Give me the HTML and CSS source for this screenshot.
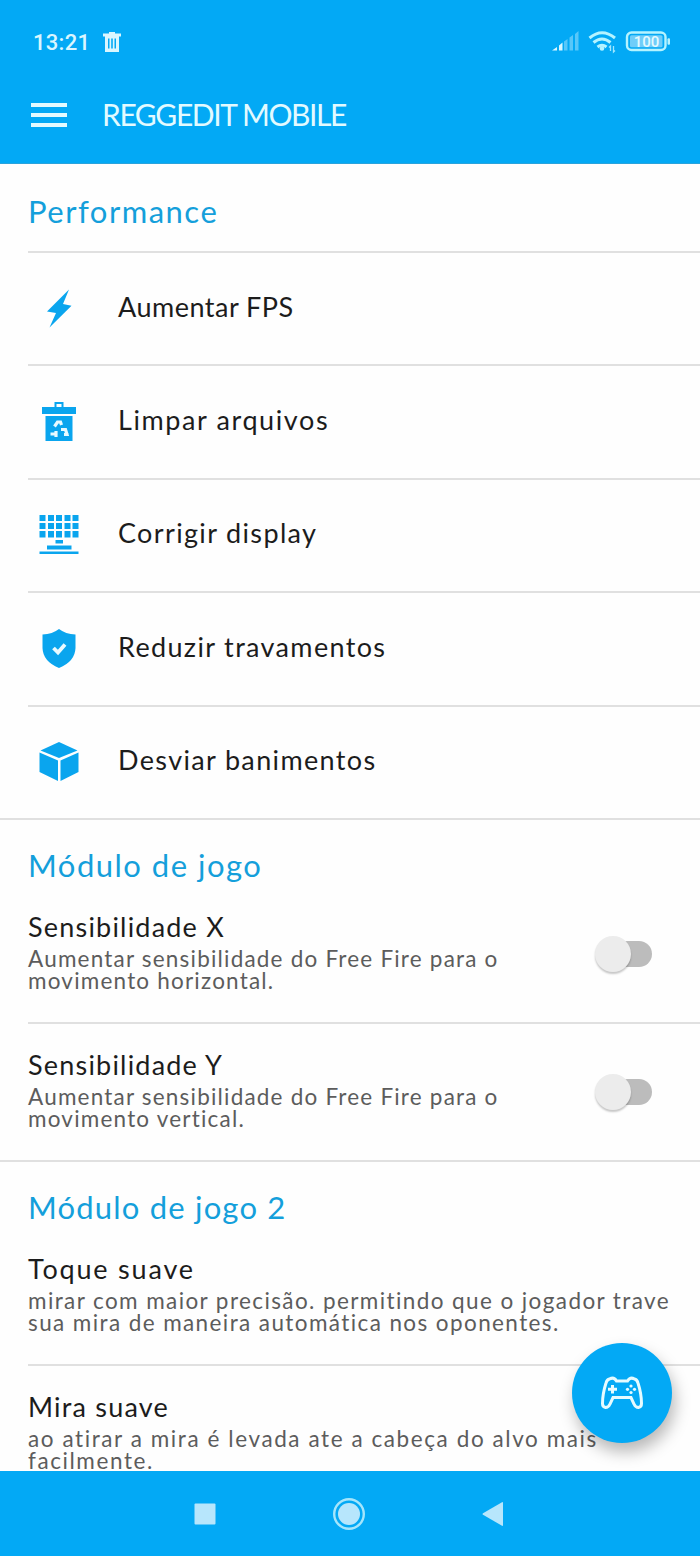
FILE: index.html
```html
<!DOCTYPE html>
<html lang="pt-BR">

<head>
    <meta charset="UTF-8">
    <meta name="viewport" content="width=device-width, initial-scale=1.0">
    <title>Reggedit Mobile</title>
    <link rel="stylesheet" href="styles.css">
</head>

<body>

    <div class="screen">
        <header>
            <div class="status-bar">
                <span class="clock">13:21</span>
                <svg class="status-trash" width="18" height="20" viewBox="0 0 18 20">
                    <path fill="#d9f6ff" fill-rule="evenodd" d="M6 0h6v1.500h6v3H0v-3h6zM2 4.500h14V20H2zM5 6.500v10h1.500v-10zM8.200 6.500v10h1.600v-10zM11.500 6.500v10h1.500v-10z" />
                </svg>
                <svg class="status-icons" width="120" height="24" viewBox="0 0 120 24">
                    <g fill="#d9f6ff">
                        <path d="M0 20.500l5-3.500v3.500zM7 15.500l3.500-3v8H7z" />
                        <path opacity="0.4" d="M12 11.500l3.500-2.500v11.500H12zM17.500 7.500L21 5v15.500h-3.500zM23 4l3.500-3v19.500H23z" />
                    </g>
                    <g fill="none" stroke="#b5f3ff" stroke-width="3">
                        <path d="M37.500 8q12.500-10.500 25.500 0" />
                        <path d="M41.500 12.500q8.500-7 17 0" />
                        <path d="M45.500 17q4.500-3.500 9 0" />
                    </g>
                    <circle cx="50" cy="18.500" r="2.300" fill="#b5f3ff" />
                    <path d="M58.500 21v-5l-1.500 1.500M61.500 16v6l1.500-1.500" fill="none" stroke="#9fe6ff" stroke-width="1.300" />
                    <rect x="75" y="2.500" width="38.500" height="17.500" rx="4.500" fill="none" stroke="#b5f3ff" stroke-width="2.400" />
                    <rect x="78" y="5.200" width="32.500" height="12" rx="1.500" fill="#6fcdf9" />
                    <rect x="115.500" y="8.200" width="2.500" height="6.500" rx="1" fill="#b5f3ff" />
                    <text class="battery" x="94.500" y="16.600" text-anchor="middle">100</text>
                </svg>
            </div>
            <div class="app-bar">
                <div class="menu">
                    <span></span>
                    <span></span>
                    <span></span>
                </div>
                <h1>REGGEDIT MOBILE</h1>
            </div>
        </header>

        <main>
            <section class="performance">
                <h2>Performance</h2>
                <ul>
                    <li>
                        <svg class="icon" viewBox="0 0 44 44">
                            <path d="M32 2.500L10 24.500l9 1.500L12.500 40.500 34.500 18.700l-8.500-1.700z" />
                        </svg>
                        <span class="short">Aumentar FPS</span>
                    </li>
                    <li>
                        <svg class="icon" viewBox="0 0 44 44">
                            <path fill-rule="evenodd" d="M17.500 2h9v5h12.500v7H5V7h12.500zM19.500 4v3h5V4z" />
                            <path d="M8.500 16h27v25h-27z" />
                            <g class="recycle">
                                <path d="M17.500 26.500l3-4.500h3l1 3" />
                                <path d="M13.500 34h7M19 31v6" />
                                <path d="M24 29.500h4.500l1.500 5h-3M29.500 34.500h2" />
                            </g>
                        </svg>
                        <span class="wide">Limpar arquivos</span>
                    </li>
                    <li>
                        <svg class="icon" viewBox="0 0 44 44">
                            <path d="M2.500 2h6v6h-6zM11 2h6v6h-6zM19 2h6v6h-6zM27.500 2h6v6h-6zM35.500 2h6v6h-6zM2.500 10h6v6h-6zM11 10h6v6h-6zM19 10h6v6h-6zM27.500 10h6v6h-6zM35.500 10h6v6h-6zM2.500 18h6v6.500h-6zM11 18h6v6.500h-6zM19 18h6v6.500h-6zM27.500 18h6v6.500h-6zM35.500 18h6v6.500h-6z" />
                            <path d="M18.500 27h7.500v3.500h-7.500zM10 32.500h24.500v4H10zM2.500 38.500h39v2.500h-39z" />
                        </svg>
                        <span>Corrigir display</span>
                    </li>
                    <li>
                        <svg class="icon" viewBox="0 0 44 44">
                            <path d="M22 2q6.500 5 16.500 5.500v13.500Q38 34.500 22 41 6 34.500 5.500 21V7.500Q15.500 7 22 2z" />
                            <path class="check" d="M16.500 21l4.500 4.500 7-8" />
                        </svg>
                        <span>Reduzir travamentos</span>
                    </li>
                    <li>
                        <svg class="icon" viewBox="0 0 44 44">
                            <path d="M22 2l18.500 8.500L22 18 3.500 10.500z" />
                            <path d="M2.500 12.500L21 20.500V41L2.500 32zM41.500 12.500L23.500 20.500V41l18-9z" />
                        </svg>
                        <span>Desviar banimentos</span>
                    </li>
                </ul>
            </section>

            <section class="module">
                <h2>Módulo de jogo</h2>
                <div class="option">
                    <div class="option-text">
                        <h3>Sensibilidade X</h3>
                        <p>Aumentar sensibilidade do Free Fire para o<br>movimento horizontal.</p>
                    </div>
                    <div class="switch"><span class="knob"></span></div>
                </div>
                <div class="option">
                    <div class="option-text">
                        <h3>Sensibilidade Y</h3>
                        <p>Aumentar sensibilidade do Free Fire para o<br>movimento vertical.</p>
                    </div>
                    <div class="switch"><span class="knob"></span></div>
                </div>
            </section>

            <section class="module aim">
                <h2>Módulo de jogo 2</h2>
                <div class="option">
                    <div class="option-text">
                        <h3 class="wide">Toque suave</h3>
                        <p>mirar com maior precisão. permitindo que o jogador trave<br>sua mira de maneira automática nos oponentes.</p>
                    </div>
                </div>
                <div class="option">
                    <div class="option-text">
                        <h3>Mira suave</h3>
                        <p class="wide">ao atirar a mira é levada ate a cabeça do alvo mais<br>facilmente.</p>
                    </div>
                </div>
            </section>
        </main>

        <div class="fab">
            <svg width="44" height="34" viewBox="0 0 44 34">
                <path class="pad" d="M9.500 3Q14 .5 16.500 5h11Q30 .5 34.500 3 37 3.500 38 7q3.500 11 3.500 20.500 0 3.500-3 4-3 0-4.500-3.500L31 21.500H13L10 28q-1.500 3.500-4.500 3.500-3-.5-3-4Q2.500 18 6 7 7 3.500 9.500 3z" />
                <path class="cross" d="M12.500 9v8.500M8 13.300h9" />
                <circle cx="31" cy="10" r="1.600" />
                <circle cx="31" cy="16.500" r="1.600" />
                <circle cx="27.500" cy="13.300" r="1.600" />
                <circle cx="34.500" cy="13.300" r="1.600" />
            </svg>
        </div>

        <footer>
            <svg width="22" height="22" viewBox="0 0 22 22">
                <rect x="0.500" y="0.500" width="21" height="21" rx="1" />
            </svg>
            <svg width="34" height="34" viewBox="0 0 34 34">
                <circle class="ring" cx="17" cy="17" r="14.800" />
                <circle cx="17" cy="17" r="11" />
            </svg>
            <svg width="22" height="26" viewBox="0 0 22 26">
                <path d="M1 12.200L20 1.200q1-.5 1 .8v22q0 1.300-1 .8L1 13.800q-1-.8 0-1.600z" />
            </svg>
        </footer>
    </div>

</body>

</html>
```

FILE: styles.css
```css
* {
    box-sizing: border-box;
    margin: 0;
    padding: 0;
}

body {
    font-family: Lato, "Liberation Sans", sans-serif;
    background: #fefefe;
    color: #1c1c1c;
}

.screen {
    position: relative;
    display: flex;
    flex-direction: column;
    width: 700px;
    height: 1556px;
    overflow: hidden;
}

header {
    flex: none;
    height: 164px;
    background: #03a9f5;
    border-bottom: 1px solid #2aa3dc;
}

.status-bar {
    display: flex;
    align-items: center;
    height: 84px;
    padding: 0 28px 0 33px;
}

.clock {
    width: 70px;
    font: 500 22px Roboto, sans-serif;
    letter-spacing: 0.3px;
    color: #d9f6ff;
}

.status-icons {
    margin-left: auto;
}

.battery {
    font: 500 15px Roboto, sans-serif;
    fill: #e4faff;
}

.app-bar {
    display: flex;
    align-items: center;
    height: 60px;
    padding-left: 31px;
}

.menu {
    display: flex;
    flex-direction: column;
    gap: 6px;
    width: 36px;
    margin: 2px 35px 0 0;
}

.menu span {
    height: 4px;
    background: #e2faff;
}

h1 {
    font-size: 30px;
    font-weight: 400;
    line-height: 40px;
    letter-spacing: -1.4px;
    color: #e2faff;
}

main {
    flex: 1;
    overflow: hidden;
}

h2 {
    padding: 25px 0 0 28px;
    font-size: 31px;
    font-weight: 400;
    line-height: 40px;
    letter-spacing: 1.5px;
    color: #149fdb;
}

.performance h2 {
    height: 87px;
    padding-top: 27px;
}

ul {
    list-style: none;
}

li {
    display: flex;
    align-items: center;
    height: 113.4px;
    margin-left: 28px;
    padding-left: 9px;
    border-top: 2px solid #e0e0e0;
    font-size: 27px;
    letter-spacing: 1.35px;
}

li span {
    margin-left: 37px;
    padding-bottom: 5px;
}

.short {
    letter-spacing: 0.5px;
}

.wide {
    letter-spacing: 1.6px;
}

.icon {
    width: 44px;
    height: 44px;
    fill: #0aa5ee;
}

.recycle,
.check {
    fill: none;
    stroke: #e8faff;
    stroke-width: 3.200;
}

.check {
    stroke-width: 3.800;
}

.module {
    border-top: 2px solid #e0e0e0;
}

.module h2 {
    height: 66px;
}

.aim h2 {
    letter-spacing: 1.2px;
}

.option {
    display: flex;
    justify-content: space-between;
    height: 136.2px;
    margin-left: 28px;
    padding: 24.2px 48.5px 0 0;
}

.option + .option {
    height: 137.8px;
    padding-top: 24px;
    border-top: 2px solid #e0e0e0;
}

.option-text {
    white-space: nowrap;
}

h3 {
    font-size: 27px;
    font-weight: 400;
    line-height: 34px;
    letter-spacing: 1.2px;
}

h3.wide {
    letter-spacing: 1.8px;
}

p {
    margin-top: 4.3px;
    font-size: 22.5px;
    line-height: 21.6px;
    letter-spacing: 1.2px;
    color: #5c5c5c;
}

.aim p {
    letter-spacing: 1.4px;
}

.aim p.wide {
    letter-spacing: 1.58px;
}

.switch {
    position: relative;
    flex: none;
    width: 48px;
    height: 26px;
    margin-top: 31px;
    border-radius: 13px;
    background: #bcbcbc;
}

.knob {
    position: absolute;
    top: -5px;
    left: -9px;
    width: 36px;
    height: 36px;
    border-radius: 50%;
    background: #ececec;
    box-shadow: 0 2px 2px rgba(0, 0, 0, 0.22);
}

.fab {
    position: absolute;
    right: 28.5px;
    bottom: 113px;
    display: flex;
    align-items: center;
    justify-content: center;
    width: 100px;
    height: 100px;
    border-radius: 50%;
    background: #03a9f5;
    box-shadow: 3px 9px 16px rgba(0, 0, 0, 0.28);
}

.fab svg {
    fill: #e6fbff;
}

.fab .pad,
.fab .cross {
    fill: none;
    stroke: #e6fbff;
    stroke-width: 3;
}

footer {
    display: flex;
    flex: none;
    align-items: center;
    justify-content: space-between;
    height: 85px;
    padding: 0 196px 0 194px;
    background: #03a9f5;
    fill: #b7e6fc;
}

.ring {
    fill: none;
    stroke: #a5e5fb;
    stroke-width: 2.400;
}
```
